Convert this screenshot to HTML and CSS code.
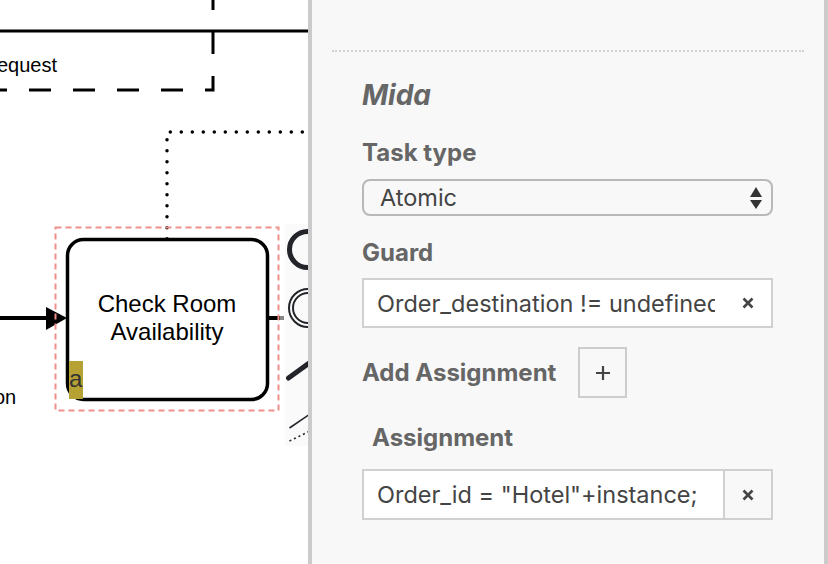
FILE: index.html
```html
<!DOCTYPE html>
<html lang="en">
<head>
<meta charset="utf-8">
<title>Mida properties</title>
<link rel="stylesheet" href="styles.css">
</head>
<body>
<main class="canvas">
  <svg class="diagram" width="308" height="564" viewBox="0 0 308 564" xmlns="http://www.w3.org/2000/svg">
    <!-- lane / pool line -->
    <line x1="0" y1="31" x2="308" y2="31" stroke="#000" stroke-width="3"/>
    <!-- dashed data group -->
    <path d="M213,-12 L213,90 L0,90" fill="none" stroke="#000" stroke-width="3" stroke-dasharray="22 22"/>
    <text x="-3" y="72" class="lbl-small">equest</text>
    <!-- dotted association -->
    <path d="M167,238.7 L167,132 L312,132" fill="none" stroke="#000" stroke-width="3.5" stroke-linecap="round" stroke-dasharray="0 11"/>
    <!-- incoming flow -->
    <line x1="0" y1="318" x2="50" y2="318" stroke="#000" stroke-width="4"/>
    <polygon points="46,307 67,318 46,330" fill="#000"/>
    <text x="-6" y="404" class="lbl-small">on</text>
    <!-- outgoing flow -->
    <line x1="268" y1="318" x2="280" y2="318" stroke="#000" stroke-width="4"/>
    <line x1="280" y1="318" x2="284" y2="318" stroke="#888" stroke-width="4"/>
    <!-- selection outline -->
    <rect x="55.5" y="227.5" width="223" height="183" fill="none" stroke="#f0908b" stroke-width="2" stroke-dasharray="6 4"/>
    <!-- task -->
    <rect x="67.5" y="239.5" width="200" height="160" rx="16" ry="16" fill="#fff" stroke="#000" stroke-width="3.5"/>
    <text x="167" y="312" text-anchor="middle" class="lbl-task">Check Room</text>
    <text x="167" y="340" text-anchor="middle" class="lbl-task">Availability</text>
    <rect x="69" y="361" width="14" height="38" fill="#b6a233"/>
    <text x="69" y="387" class="lbl-marker">a</text>
    <!-- context pad (partially covered) -->
    <rect x="285" y="224" width="23" height="222" fill="#fafafa"/>
    <circle cx="307.5" cy="249.5" r="18" fill="none" stroke="#22242a" stroke-width="5"/>
    <circle cx="308" cy="308" r="19" fill="none" stroke="#22242a" stroke-width="2"/>
    <circle cx="308" cy="308" r="15" fill="none" stroke="#22242a" stroke-width="2"/>
    <line x1="288.5" y1="378" x2="312" y2="361" stroke="#22242a" stroke-width="5" stroke-linecap="round"/>
    <line x1="289.5" y1="428" x2="310" y2="414" stroke="#22242a" stroke-width="1.6"/>
    <line x1="289.5" y1="441" x2="310" y2="431" stroke="#22242a" stroke-width="1.6" stroke-dasharray="2 3"/>
  </svg>
</main>
<aside class="panel">
  <div class="sep"></div>
  <div class="content">
    <h2 class="title">Mida</h2>
    <div class="label first">Task type</div>
    <div class="select">
      <span class="select-text">Atomic</span>
      <svg class="arrows" width="12" height="22" viewBox="0 0 12 22" xmlns="http://www.w3.org/2000/svg">
        <polygon points="6,0 12,10 0,10" fill="#333"/>
        <polygon points="0,13 12,13 6,22" fill="#333"/>
      </svg>
    </div>
    <div class="label">Guard</div>
    <div class="field">
      <span class="field-text">Order_destination != undefined</span>
      <span class="field-btn">
        <svg width="12" height="12" viewBox="0 0 12 12" xmlns="http://www.w3.org/2000/svg"><path d="M1.5,1.5 L10.5,10.5 M10.5,1.5 L1.5,10.5" stroke="#444" stroke-width="2.6"/></svg>
      </span>
    </div>
    <div class="add-row">
      <span class="label inline">Add Assignment</span>
      <span class="add-btn">
        <svg width="14" height="14" viewBox="0 0 14 14" xmlns="http://www.w3.org/2000/svg"><path d="M7,0 V14 M0,7 H14" stroke="#444" stroke-width="2.2"/></svg>
      </span>
    </div>
    <div class="label sub">Assignment</div>
    <div class="field split">
      <span class="field-text">Order_id = "Hotel"+instance;</span>
      <span class="field-btn">
        <svg width="12" height="12" viewBox="0 0 12 12" xmlns="http://www.w3.org/2000/svg"><path d="M1.5,1.5 L10.5,10.5 M10.5,1.5 L1.5,10.5" stroke="#444" stroke-width="2.6"/></svg>
      </span>
    </div>
  </div>
</aside>
</body>
</html>
```

FILE: styles.css
```css
html, body {
  margin: 0;
  padding: 0;
}
body {
  width: 828px;
  height: 564px;
  overflow: hidden;
  display: flex;
  background: #fff;
  font-family: Inter, "Noto Sans", sans-serif;
}
.canvas {
  width: 308px;
  height: 564px;
  flex: none;
  background: #fff;
}
.diagram {
  display: block;
}
.lbl-small {
  font-family: "Liberation Sans", Arial, sans-serif;
  font-size: 20px;
  fill: #000;
}
.lbl-task {
  font-family: "Liberation Sans", Arial, sans-serif;
  font-size: 24px;
  fill: #000;
}
.lbl-marker {
  font-family: "Liberation Sans", Arial, sans-serif;
  font-size: 24px;
  fill: #333;
}
.panel {
  flex: none;
  width: 520px;
  min-width: 0;
  height: 564px;
  box-sizing: border-box;
  background: #f8f8f8;
  border-left: 4px solid #cbcbcb;
  border-right: 4px solid #cbcbcb;
  padding-top: 50px;
}
.sep {
  margin: 0 20px;
  border-top: 2px dotted #d2d2d2;
}
.content {
  padding: 0 51px 0 50px;
  margin-top: 26px;
  display: flex;
  flex-direction: column;
  min-width: 0;
}
.title {
  margin: 0;
  font-size: 28px;
  line-height: 34px;
  font-style: italic;
  font-weight: 700;
  color: #666;
}
.label {
  font-size: 24px;
  line-height: 26px;
  font-weight: 700;
  color: #666;
  margin-top: 24px;
}
.label.first {
  margin-top: 28px;
}
.label.inline {
  margin-top: 0;
}
.label.sub {
  margin-top: 27px;
  margin-left: 10px;
}
.select {
  margin-top: 13px;
  height: 37px;
  box-sizing: border-box;
  border: 2px solid #b8b8b8;
  border-radius: 8px;
  display: flex;
  align-items: center;
  padding: 0 9px 0 16px;
}
.select-text {
  flex: 1;
  font-size: 23.5px;
  color: #444;
}
.arrows {
  display: block;
}
.field {
  margin-top: 12px;
  height: 50px;
  min-width: 0;
  box-sizing: border-box;
  border: 2px solid #d0d0d0;
  background: #fff;
  display: flex;
  align-items: stretch;
}
.field.split {
  margin-top: 18px;
  height: 51px;
}
.field-text {
  flex: 1;
  min-width: 0;
  margin: 0 8px 0 13px;
  overflow: hidden;
  white-space: nowrap;
  font-size: 23.5px;
  color: #444;
  display: flex;
  align-items: center;
}
.field-btn {
  width: 46px;
  flex: none;
  display: flex;
  align-items: center;
  justify-content: center;
  border-left: 2px solid transparent;
}
.field.split .field-btn {
  border-left-color: #d0d0d0;
  background: #f8f8f8;
}
.add-row {
  margin-top: 19px;
  display: flex;
  align-items: center;
  gap: 22px;
}
.add-btn {
  width: 49px;
  height: 51px;
  box-sizing: border-box;
  border: 2px solid #cdcdcd;
  display: flex;
  align-items: center;
  justify-content: center;
}
```
